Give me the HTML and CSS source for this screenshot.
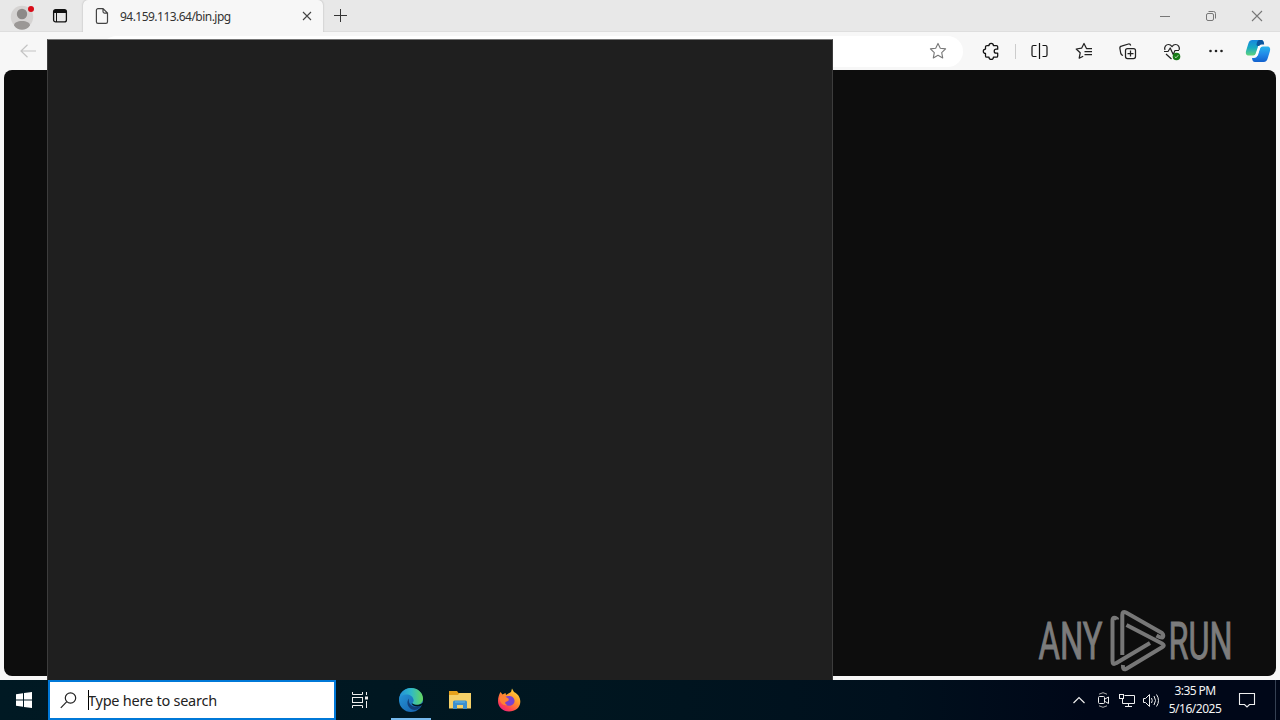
FILE: index.html
```html
<!DOCTYPE html>
<html lang="en">
<head>
<meta charset="utf-8">
<title>94.159.113.64/bin.jpg</title>
<link rel="stylesheet" href="styles.css">
</head>
<body>
<div class="browser">
  <header class="tabstrip">
    <div class="strip-left">
      <svg class="profile" width="26" height="28" viewBox="0 0 26 28"><circle cx="12" cy="14" r="11.2" fill="#d5d3d2"/><circle cx="12" cy="11" r="5.2" fill="#8d8a88"/><path d="M4 22.5c0-3 3.500-4.600 8-4.600s8 1.600 8 4.600c-2 3-5 4.200-8 4.200s-6-1.200-8-4.200z" fill="#9b9896"/><circle cx="21" cy="6" r="3" fill="#d80c18"/></svg>
      <svg class="workspaces" width="16" height="16" viewBox="0 0 16 16" fill="none" stroke="#111"><rect x="1.600" y="1.600" width="12.800" height="12.300" rx="2" stroke-width="1.300"/><path d="M2 3.500h12" stroke-width="3"/><path d="M4.500 4v10" stroke-width="1"/></svg>
    </div>
    <div class="tab">
      <svg class="doc" width="14" height="18" viewBox="0 0 14 18" fill="none" stroke="#444" stroke-width="1.200"><path d="M3 1.600h5l4.500 4.500v8.700a1.600 1.600 0 0 1-1.600 1.600H3a1.600 1.600 0 0 1-1.600-1.600V3.200A1.600 1.600 0 0 1 3 1.600zM8 1.600v3a1.500 1.500 0 0 0 1.500 1.500h3"/></svg>
      <span class="tab-title">94.159.113.64/bin.jpg</span>
      <svg class="tab-close" width="10" height="10" viewBox="0 0 10 10" stroke="#444" stroke-width="1.100"><path d="M1 1l8 8M9 1l-8 8"/></svg>
    </div>
    <svg class="newtab" width="14" height="14" viewBox="0 0 14 14" stroke="#333"><path d="M6.500 0v13M0 6.500h13"/></svg>
    <div class="window-controls">
      <svg width="46" height="32" viewBox="0 0 46 32" stroke="#777"><path d="M18 16.500h10"/></svg>
      <svg width="46" height="32" viewBox="0 0 46 32" fill="none" stroke="#777"><rect x="18.500" y="13.500" width="7" height="7" rx="1.500"/><path d="M20.500 11.500h5a2 2 0 0 1 2 2v5"/></svg>
      <svg width="46" height="32" viewBox="0 0 46 32" stroke="#777" stroke-width="1.100"><path d="M18 11l10 10M28 11l-10 10"/></svg>
    </div>
  </header>
  <div class="toolbar">
    <svg class="back" width="17" height="14" viewBox="0 0 17 14" fill="none" stroke="#c4c4c4" stroke-width="1.200"><path d="M16 7H1M7.500.8L1 7l6.500 6.200"/></svg>
    <div class="address">
      <svg width="18" height="18" viewBox="0 0 18 18" fill="none" stroke="#777" stroke-width="1.100" stroke-linejoin="round"><path d="M9 1.400l2.300 4.800 5.300.7-3.900 3.700 1 5.300L9 13.300l-4.700 2.600 1-5.300-3.900-3.700 5.300-.7z"/></svg>
    </div>
    <div class="tools">
      <svg width="44" height="30" viewBox="0 0 44 30" fill="none" stroke="#111" stroke-width="1.250" stroke-linejoin="round"><path d="M18 9.500h2a2.200 2.200 0 0 1 4.400 0h3a1.300 1.300 0 0 1 1.300 1.300v2.400h-1.500a2 2 0 0 0 0 4h1.500v2.700a1.300 1.300 0 0 1-1.300 1.300h-3a2.200 2.200 0 0 1-4.400 0h-2.200a1.300 1.300 0 0 1-1.300-1.300v-2.500a2.200 2.200 0 0 1 0-4.400v-2.200q0-1.300 1.500-1.300"/></svg>
      <i class="divider"></i>
      <svg class="split" width="44" height="30" viewBox="0 0 44 30" fill="none" stroke="#111" stroke-width="1.200"><path d="M18.500 9.500h-3a1.500 1.500 0 0 0-1.500 1.500v8a1.500 1.500 0 0 0 1.500 1.500h3M24.500 9.500h3A1.500 1.500 0 0 1 29 11v8a1.500 1.500 0 0 1-1.500 1.500h-3M21.500 7v16"/></svg>
      <svg width="44" height="30" viewBox="0 0 44 30" fill="none" stroke="#222" stroke-width="1.250" stroke-linejoin="round"><path d="M30 12.500h-5.500L22 7.500l-2.400 4.700-5.400.8 4 3.800-1 5.400 4-2M22.500 15.500H30M22.500 18.500H30"/></svg>
      <svg width="44" height="30" viewBox="0 0 44 30" fill="none" stroke="#222" stroke-width="1.250" stroke-linejoin="round"><path d="M17 19.500c-1.300-.4-1.900-1-2.200-2l-.9-5a2 2 0 0 1 1.600-2.300L22.500 8a2 2 0 0 1 2.200 1.500"/><rect x="19.500" y="12.500" width="10" height="10" rx="2"/><path d="M24.500 14.500v6M21.500 17.500h6"/></svg>
      <svg width="44" height="30" viewBox="0 0 44 30" fill="none" stroke="#222" stroke-width="1.200" stroke-linejoin="round"><path d="M15 14c-1.200-3 1-5.500 3.500-5.500 1.700 0 2.700 1 3.500 2.200.8-1.200 1.800-2.200 3.500-2.200 2.700 0 4.500 2.500 3.600 5.500M14 15.500h4l2.200-3.500 3 6.500 1.800-4H29M16 18l5.500 5"/><circle cx="26.500" cy="20.500" r="3.800" fill="#167a16" stroke="none"/><path d="M24.800 20.700l1.200 1.100 2.300-2.600" stroke="#b9dcb6" stroke-width="1"/></svg>
      <svg width="44" height="30" viewBox="0 0 44 30" fill="#222"><circle cx="16.500" cy="15" r="1.300"/><circle cx="22" cy="15" r="1.300"/><circle cx="27.500" cy="15" r="1.300"/></svg>
      <svg class="copilot" width="26" height="26" viewBox="0 0 26 26"><defs><linearGradient id="cp1" x2="0" y2="1"><stop stop-color="#1687df"/><stop offset=".5" stop-color="#18aac2"/><stop offset="1" stop-color="#60d47c"/></linearGradient><linearGradient id="cp2" x2="0" y2="1"><stop stop-color="#28b5ec"/><stop offset=".5" stop-color="#218ae8"/><stop offset="1" stop-color="#1261ce"/></linearGradient></defs><path d="M7.500 2H16c2 0 2.500 1.500 3 4h-2c-2 0-3 1-3.500 3l-2 5.500c-.6 2-1.500 3-3.500 3H4c-3 0-3.700-2-2.800-5l2-6.500C4 3.500 5 2 7.500 2z" fill="url(#cp1)"/><path d="M14.500 2H16c2 0 2.600 1 3.200 4.500H17c-1.500 0-2.600.5-3.300 2.500L11.500 7c.4-2.500 1-5 3-5z" fill="#0a559d"/><path d="M18.500 24H10c-2 0-2.600-1.500-3-4h2c2 0 3-1 3.500-3l2-5.500c.6-2 1.500-3 3.500-3h4c3 0 3.700 2 2.800 5l-2 6.500c-.8 2.500-1.800 4-4.300 4z" fill="url(#cp2)"/><path d="M13 8h4.200c-1.500.4-2 2-2.500 3.500L13.200 16.500c-.5 1.500-1.500 2-2.500 2H8.400c1.700-.7 2.100-2 2.500-3.500l1.500-4.500c.3-1 .6-1.800.6-2.500z" fill="#fff"/></svg>
    </div>
  </div>
  <main class="viewport">
    <div class="page">
      <svg class="watermark" width="204" height="64" viewBox="0 0 204 64"><g fill="#7c7c7c" stroke="#7c7c7c" stroke-width="1"><text x="2.500" y="50" textLength="64" lengthAdjust="spacingAndGlyphs">ANY</text><text x="132.500" y="50" textLength="64" lengthAdjust="spacingAndGlyphs">RUN</text></g><g fill="none" stroke="#777" stroke-width="4" stroke-linejoin="round"><path d="M81 10.500V9.800q-4.500-3-4.500 2V52q0 4.500 3.500 2.200L114 34"/><path d="M86.300 46V6q0-4.500 3.700-2.500L126 24q2.200 2.500.5 4.500-1.500.5-6-2"/><path d="M90.500 16L126.500 34.800q2.500 1.700 0 3.200L90 60q-3.500 1.500-3-4"/></g></svg>
    </div>
  </main>
</div>
<footer class="taskbar">
  <div class="start"><svg width="16" height="16" viewBox="0 0 16 16" fill="#fff"><path d="M0 2.200l7-1V7.500H0zM8 1l8-1v7.500H8zM0 8.500h7v6.300l-7-1zM8 8.500h8V16l-8-1z"/></svg></div>
  <div class="search">
    <svg width="17" height="17" viewBox="0 0 17 17" fill="none" stroke="#222" stroke-width="1.200"><circle cx="10.500" cy="6" r="5.200"/><path d="M6.600 9.900L.8 15.900"/></svg>
    <i class="caret"></i><span class="search-text">Type here to search</span>
  </div>
  <div class="apps">
    <div class="app"><svg width="18" height="18" viewBox="0 0 18 18" fill="none" stroke="#eee"><path d="M1.500 1v2.500h10V1M1.500 17v-2.500h10V17M15.500 1v3M15.500 10v7"/><rect x="1.500" y="6.500" width="10" height="5"/><path d="M14 7h3" stroke-width="3"/></svg></div>
    <div class="app active"><svg width="26" height="26" viewBox="0 0 26 26"><defs><linearGradient id="eg" x2="1"><stop stop-color="#238ed8"/><stop offset=".5" stop-color="#2fb9c8"/><stop offset="1" stop-color="#65d75d"/></linearGradient><linearGradient id="eb" x2="1" y2="1"><stop stop-color="#269bdc"/><stop offset="1" stop-color="#155aa7"/></linearGradient></defs><circle cx="13" cy="13" r="12" fill="url(#eb)"/><path d="M1.200 12C2 5 7 1 13 1c7 0 12 5 12 10.500 0 4-3 6.500-6.500 6.500-3 0-4.500-1-4-2 1-1.300 1.500-2 1-3.500C15 9.500 12 7.500 8.500 7.500 5 7.500 2 9 1.200 12z" fill="url(#eg)"/><path d="M11 11.500c-3 3-1.500 9 3 11 3 1.200 6.500 0 9-3.500-4 2-9 .8-11-2-1.200-1.700-1.500-3.700-1-5.500z" fill="#123f7a"/><path d="M13.500 16.500c1.500 3 6.500 4 10.500 1.800.8-.5 1-.1.500.7L27 20V16l-2.500 0c-2 2-7.500 2.500-10 .5z" fill="#00141d"/></svg></div>
    <div class="app"><svg width="22" height="20" viewBox="0 0 22 20"><path d="M0 1h8l1.500 2H21v4H0z" fill="#e6a21c"/><path d="M0 5h9l1.500-2H22v15.500H0z" fill="#f5d068"/><path d="M4 19v-7a1.500 1.500 0 0 1 1.500-1.500h11A1.500 1.500 0 0 1 18 12v7h-4v-4H8v4z" fill="#3b8fce"/><path d="M6 12h10" stroke="#65b7e7"/></svg></div>
    <div class="app"><svg width="24" height="24" viewBox="0 0 24 24"><defs><linearGradient id="ff" x1=".9" x2=".2" y2="1"><stop stop-color="#ffe43d"/><stop offset=".45" stop-color="#ff922b"/><stop offset=".8" stop-color="#ff4052"/><stop offset="1" stop-color="#e91e86"/></linearGradient></defs><path d="M3.500 4l2 2.500L8.500 5 9 7l5-3 1-3.500L17 4c4 2 6.500 5.500 6.300 10C23 20 18 23.500 12 23.500S1 19 1 13c0-3.500 1-6.500 2.500-9z" fill="url(#ff)"/><path d="M8 9c3-2 9-1.500 9.500 3.500.3 3-2.500 5.200-5.500 5.200-3 0-4.700-1.700-5-4 2 .5 4-.2 5-2-1.700 0-3-1-4-2.700z" fill="#7842cf"/><path d="M2 10c2-3 5-3 7-1l3 2c-1 2-3 1.500-3.500 3-.8 1 0 2.500 2 3-5 1-7-2-8.500-7z" fill="#ff8134"/></svg></div>
  </div>
  <div class="tray">
    <svg width="24" height="20" viewBox="0 0 24 20" fill="none" stroke="#eee" stroke-width="1.200"><path d="M6.500 13L12 7.500l5.500 5.500"/></svg>
    <svg width="24" height="20" viewBox="0 0 24 20" fill="none" stroke="#eee"><rect x="7.500" y="6.500" width="6" height="7" rx="1"/><path d="M14 9l3.500-2v6.500L14 11.500"/><path d="M8 4.200q4-3 8 0M8 15.800q4 3 8 0" stroke="#aaa"/></svg>
    <svg width="24" height="20" viewBox="0 0 24 20" fill="none" stroke="#eee"><path d="M9.500 5.500h10v8h-12v-5M13.500 13.500v3M10 16.500h7"/><rect x="4.500" y="4.500" width="4" height="4"/></svg>
    <svg width="24" height="20" viewBox="0 0 24 20" fill="none" stroke="#eee"><path d="M4.500 8.500h2l4-4v12l-4-4h-2zM12.500 8q1.500 2.500 0 5M15 6q3 4.500 0 9M17.500 4.500q4 6 0 12"/></svg>
    <div class="clock"><span>3:35 PM</span><span class="date">5/16/2025</span></div>
    <svg class="notice" width="18" height="18" viewBox="0 0 18 18" fill="none" stroke="#eee" stroke-width="1.100"><path d="M1.500 2.500h15v11h-5L9 16l-2.500-2.500h-5z"/></svg>
    <i class="desktop-edge"></i>
  </div>
</footer>
<div class="search-panel"></div>
</body>
</html>
```
FILE: styles.css
```css
* { box-sizing: border-box; }
body { margin: 0; width: 1280px; height: 720px; overflow: hidden; display: flex; flex-direction: column; font-family: "Noto Sans", sans-serif; background: #f7f7f7; }
svg { display: block; flex: none; }
.browser { height: 680px; display: flex; flex-direction: column; }
.tabstrip { height: 32px; display: flex; align-items: center; background: #e8e8e8; border-bottom: 1px solid #dedede; }
.strip-left { width: 83px; display: flex; align-items: center; padding-left: 10px; }
.profile { margin-top: 2px; }
.workspaces { margin-left: 16px; }
.tab { width: 240px; height: 32px; display: flex; align-items: center; align-self: flex-start; padding: 0 12px; background: #f7f7f7; border-radius: 5px 5px 0 0; box-shadow: 0 0 2px #aaa; clip-path: inset(0 -3px 0 -3px); }
.doc { margin-top: -1px; }
.tab-title { margin-left: 11px; font-size: 12px; letter-spacing: -.53px; color: #333; flex: 1; white-space: nowrap; }
.tab-close { margin-right: -1px; }
.newtab { margin-left: 11px; }
.window-controls { display: flex; margin-left: auto; }
.toolbar { height: 38px; display: flex; align-items: center; background: #f7f7f7; }
.back { margin: 0 0 0 20px; }
.address { width: 862px; height: 31px; margin-left: 64px; padding-right: 16px; display: flex; align-items: center; justify-content: flex-end; background: #fff; border-radius: 16px; }
.tools { display: flex; align-items: center; margin-left: 6px; }
.divider { width: 1px; height: 15px; margin-left: 2px; background: #ccc; }
.split { margin-left: 2px; }
.copilot { margin-left: 7px; }
.viewport { flex: 1; padding: 0 4px 4px; background: #f7f7f7; }
.page { height: 606px; display: flex; align-items: flex-end; justify-content: flex-end; padding: 0 36px 3px 0; background: #0d0d0d; border-radius: 8px; }
.watermark { overflow: visible; font-family: Roboto, sans-serif; font-size: 52px; }
.search-panel { position: absolute; left: 47px; top: 39px; width: 786px; height: 641px; background: #1f1f1f; border: 1px solid #3c3c3c; border-top-color: #777; border-bottom: 0; }
.taskbar { height: 40px; display: flex; background: linear-gradient(90deg, #001923, #001620 45%, #00101d 70%, #000718 85%, #000718); color: #f4f4f4; }
.start { width: 48px; display: flex; align-items: center; justify-content: center; }
.search { width: 288px; display: flex; align-items: center; padding-left: 10px; background: #fff; border: 2px solid #0078d7; color: #222; }
.caret { width: 1px; height: 20px; margin-left: 11px; background: #000; }
.search-text { margin-left: -1px; font-size: 14.500px; letter-spacing: -.24px; white-space: nowrap; }
.apps { display: flex; }
.app { width: 49px; height: 40px; display: flex; align-items: center; justify-content: center; }
.app:first-child { width: 48px; }
.app.active { background: linear-gradient(#76b9ed, #76b9ed) center bottom / 40px 2px no-repeat; margin-left: 2px; }
.tray { margin-left: auto; display: flex; align-items: center; }
.clock { width: 64px; display: flex; flex-direction: column; align-items: center; font-size: 12px; line-height: 18px; letter-spacing: -.6px; white-space: nowrap; }
.date { letter-spacing: -.48px; }
.notice { margin-left: 11px; }
.desktop-edge { width: 1px; height: 40px; margin: 0 4px 0 19px; background: #354052; }
```
